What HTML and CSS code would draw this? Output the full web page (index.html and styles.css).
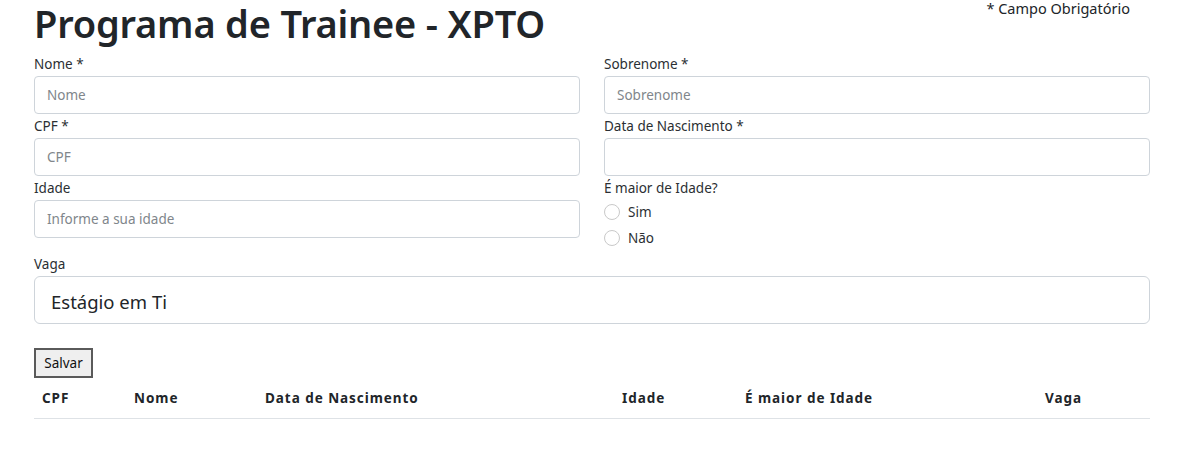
FILE: index.html
```html
<!DOCTYPE html>
<html lang="pt-BR">
<head>
<meta charset="utf-8">
<title>Programa de Trainee - XPTO</title>
<link rel="stylesheet" href="styles.css">
</head>
<body>
<div class="container">
  <header class="page-head">
    <h1 class="title">Programa de Trainee - XPTO</h1>
    <span class="required-note">* Campo Obrigatório</span>
  </header>
  <form class="form">
    <div class="grid">
      <div class="col">
        <div class="field">
          <label class="label">Nome *</label>
          <input class="input" type="text" placeholder="Nome">
        </div>
        <div class="field">
          <label class="label">CPF *</label>
          <input class="input" type="text" placeholder="CPF">
        </div>
        <div class="field">
          <label class="label">Idade</label>
          <input class="input" type="text" placeholder="Informe a sua idade">
        </div>
      </div>
      <div class="col">
        <div class="field">
          <label class="label">Sobrenome *</label>
          <input class="input" type="text" placeholder="Sobrenome">
        </div>
        <div class="field">
          <label class="label">Data de Nascimento *</label>
          <input class="input" type="text">
        </div>
        <div class="field">
          <span class="label">É maior de Idade?</span>
          <label class="radio"><span class="radio-dot"></span>Sim</label>
          <label class="radio"><span class="radio-dot"></span>Não</label>
        </div>
      </div>
    </div>
    <div class="field">
      <label class="label">Vaga</label>
      <div class="select">Estágio em Ti</div>
    </div>
    <div class="actions">
      <button class="btn" type="button">Salvar</button>
    </div>
  </form>
  <table class="table">
    <colgroup>
      <col class="c-cpf"><col class="c-nome"><col class="c-data"><col class="c-idade"><col class="c-maior"><col class="c-vaga">
    </colgroup>
    <thead>
      <tr>
        <th>CPF</th><th>Nome</th><th>Data de Nascimento</th><th>Idade</th><th>É maior de Idade</th><th>Vaga</th>
      </tr>
    </thead>
    <tbody></tbody>
  </table>
</div>
</body>
</html>
```
FILE: styles.css
```css
* { box-sizing: border-box; }
body {
  margin: 0;
  font-family: "Noto Sans", "Open Sans", sans-serif;
  color: #212529;
  background: #fff;
}
.container {
  width: 1116px;
  margin-left: 34px;
}
.page-head {
  display: flex;
  justify-content: space-between;
  align-items: flex-start;
  height: 52px;
  padding-top: 1px;
}
.title {
  margin: 0;
  font-size: 38px;
  font-weight: 600;
  line-height: 44px;
  letter-spacing: -0.2px;
}
.required-note {
  font-size: 14.5px;
  line-height: 14px;
  margin-right: 20px;
  color: #212529;
}
.grid {
  display: grid;
  grid-template-columns: 1fr 1fr;
  column-gap: 24px;
}
.field { display: flex; flex-direction: column; }
.label {
  font-size: 13.5px;
  line-height: 24px;
  color: #2b2f33;
}
.input {
  height: 38px;
  border: 1px solid #ced4da;
  border-radius: 4px;
  padding: 0 12px;
  font-family: inherit;
  font-size: 13.5px;
  color: #212529;
  background: #fff;
}
.input::placeholder { color: #80868b; }
.radio {
  display: flex;
  align-items: center;
  gap: 8px;
  height: 24px;
  margin-bottom: 2px;
  font-size: 13.5px;
  color: #2b2f33;
}
.radio-dot {
  width: 16px;
  height: 16px;
  border: 1px solid #c9c9c9;
  border-radius: 50%;
  background: #fff;
}
.select {
  height: 48px;
  border: 1px solid #ced4da;
  border-radius: 6px;
  padding: 3px 16px 0;
  display: flex;
  align-items: center;
  font-size: 18.5px;
}
.actions { margin-top: 24px; }
.btn {
  display: block;
  width: 59px;
  height: 30px;
  padding: 0;
  background: #efefef;
  border: 2px solid #5a5a5a;
  border-radius: 0;
  font-family: inherit;
  font-size: 13.5px;
  color: #111;
}
.table {
  width: 100%;
  border-collapse: collapse;
  table-layout: fixed;
}
.table th {
  text-align: left;
  padding: 8px;
  line-height: 24px;
  font-size: 13.5px;
  font-weight: 700;
  letter-spacing: 0.95px;
  border-bottom: 1px solid #dee2e6;
}
.c-cpf { width: 92px; }
.c-nome { width: 131px; }
.c-data { width: 357px; }
.c-idade { width: 123px; }
.c-maior { width: 300px; }
.c-vaga { width: 113px; }
```
